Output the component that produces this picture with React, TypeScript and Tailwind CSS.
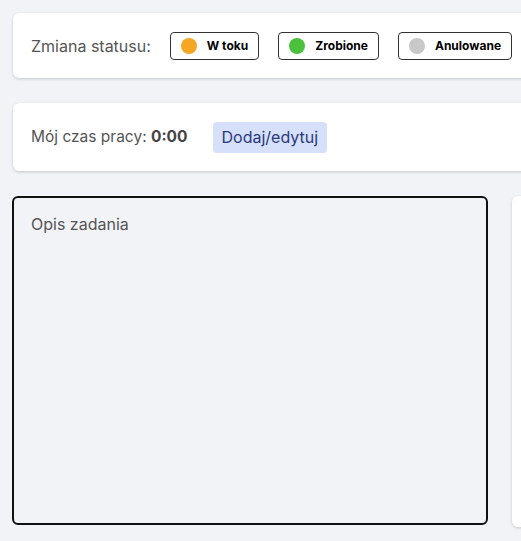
import React from 'react'

const statuses = [
  { label: 'W toku', color: 'bg-[#f5a623]' },
  { label: 'Zrobione', color: 'bg-[#4cc13b]' },
  { label: 'Anulowane', color: 'bg-[#c8c8c8]' },
]

export default function App() {
  return (
    <div
      className="h-[541px] w-full overflow-hidden bg-[#f2f3f7]"
      style={{ fontFamily: 'Inter, Roboto, "Noto Sans", sans-serif' }}
    >
      <div className="w-[640px] pl-[13px] pt-[13px]">
        <div className="flex h-[65px] items-center rounded-md bg-white pl-[18px] shadow-[0_1px_3px_rgba(0,0,0,0.18)]">
          <span className="mr-[19px] text-[16px] text-[#555]">Zmiana statusu:</span>
          <div className="flex gap-[19px]">
            {statuses.map((s) => (
              <button
                key={s.label}
                className="flex h-[28px] items-center gap-[10px] rounded-[4px] border border-[#333] bg-white pl-[10px] pr-[10px] text-[12px] font-bold text-black"
              >
                <span className={`h-4 w-4 rounded-full ${s.color}`} />
                {s.label}
              </button>
            ))}
          </div>
        </div>

        <div className="mt-[25px] flex h-[68px] items-center rounded-md bg-white pl-[18px] shadow-[0_1px_3px_rgba(0,0,0,0.18)]">
          <span className="text-[15.5px] text-[#555]">
            Mój czas pracy: <span className="font-bold text-[#444]">0:00</span>
          </span>
          <button className="ml-[25px] h-[31px] rounded-[4px] bg-[#d6e0fb] px-[9px] text-[16px] text-[#2a3a7c]">
            Dodaj/edytuj
          </button>
        </div>

        <div className="-ml-px mt-[25px] flex gap-[24px]">
          <div className="h-[329px] w-[476px] rounded-md border-2 border-[#111] bg-[#f2f3f7] pl-[17px] pt-[14px] text-[16px] text-[#555]">
            Opis zadania
          </div>
          <div className="h-[331px] flex-1 rounded-md bg-white shadow-[0_1px_3px_rgba(0,0,0,0.18)]" />
        </div>
      </div>
    </div>
  )
}
